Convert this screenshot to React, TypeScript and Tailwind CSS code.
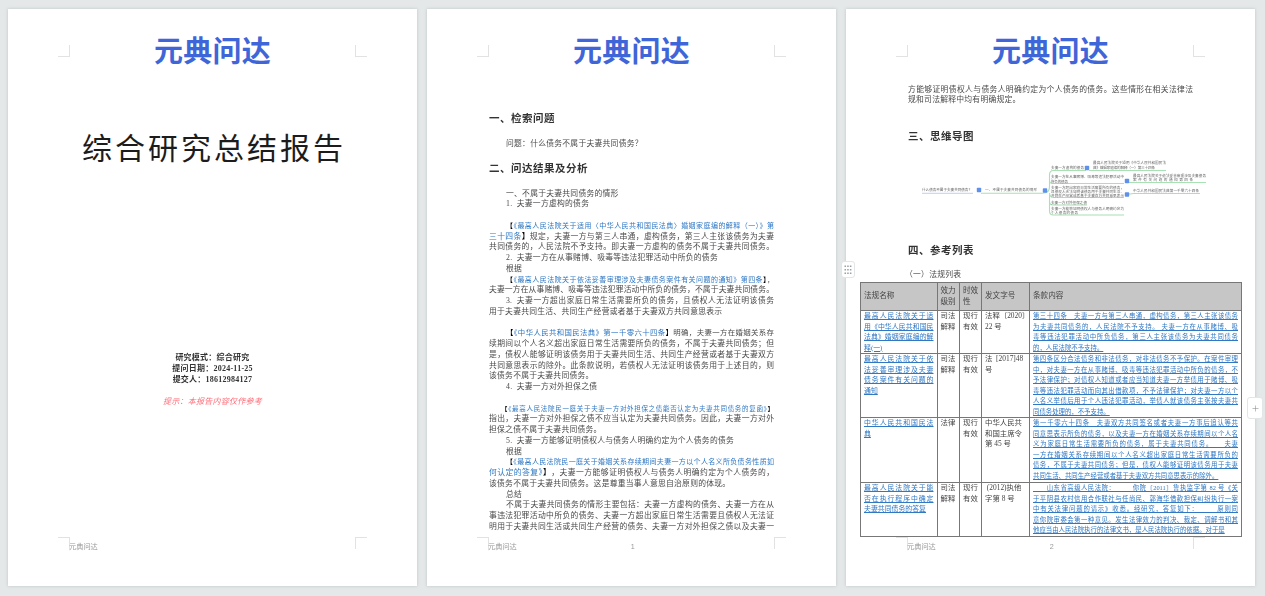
import type { ReactNode } from 'react'
import { Plus } from 'lucide-react'

const serif = "font-['Liberation_Serif','Noto_Sans_CJK_SC',serif]"
const sans = "font-['Liberation_Sans','Noto_Sans_CJK_SC',sans-serif]"

function Mark({ className }: { className: string }) {
  return <div className={`absolute h-3 w-3 border-[#e2e2e2] ${className}`} />
}

function Logo() {
  return (
    <div className={`pt-[28px] text-center text-[29px] leading-[30px] font-bold tracking-[0.3px] text-[#3f66d8] ${sans}`}>
      元典问达
    </div>
  )
}

function Footer({ page }: { page?: number }) {
  return (
    <div className={`relative z-10 mt-auto mb-[34px] flex h-[10px] pl-[61px] text-[7.2px] leading-[10px] text-[#999] blur-[0.4px] ${sans}`}>
      <span>元典问达</span>
      {page && <span className="ml-[114px]">{page}</span>}
    </div>
  )
}

function Page({ children, page }: { children: ReactNode; page?: number }) {
  return (
    <section className="relative flex h-[577px] w-[409px] shrink-0 flex-col bg-white shadow-[0_0_3px_rgba(120,130,130,0.35)]">
      <Mark className="top-[36px] left-[50px] border-r border-b" />
      <Mark className="top-[36px] left-[347px] border-b border-l" />
      <Mark className="top-[528px] left-[50px] border-t border-r" />
      <Mark className="top-[528px] left-[347px] border-t border-l" />
      <Logo />
      {children}
      <Footer page={page} />
    </section>
  )
}

function L({ children, j, i, size = 'text-[7.8px]', className = '' }: { children?: ReactNode; j?: boolean; i?: boolean; size?: string; className?: string }) {
  return (
    <div
      className={`h-[10.75px] leading-[10.75px] text-[#4a4a4a] ${size} ${j ? '[text-align-last:justify]' : 'tracking-[0.25px] whitespace-nowrap'} ${i ? 'pl-[17px]' : ''} ${className}`}
    >
      {children}
    </div>
  )
}

function A({ children }: { children: ReactNode }) {
  return <span className="text-[#2f78c4]">{children}</span>
}

function B({ children }: { children: ReactNode }) {
  return <span className="font-bold text-black">{children}</span>
}

function H({ children, className = '' }: { children: ReactNode; className?: string }) {
  return <h2 className={`h-[14px] text-[10.5px] leading-[14px] font-bold tracking-[0.5px] text-[#333] ${className}`}>{children}</h2>
}

function Cell({ lines, link, size = 'text-[7.4px]', j }: { lines: string[]; link?: boolean; size?: string; j?: boolean }) {
  const color = link ? 'text-[#2f78c4] underline' : 'text-[#444]'
  return (
    <td className={`overflow-hidden border border-[#777] px-[3px] align-top ${color}`}>
      {lines.map((t, n) => (
        <div
          key={n}
          className={`h-[10.5px] leading-[10.5px] ${size} ${j && n < lines.length - 1 ? '[text-align-last:justify]' : 'whitespace-nowrap'}`}
        >
          {t}
        </div>
      ))}
    </td>
  )
}

const rows = [
  {
    h: 'h-[43px]',
    name: ['最高人民法院关于适', '用《中华人民共和国民', '法典》婚姻家庭编的解', '释(一)'],
    level: ['司法', '解释'],
    doc: ['法释〔2020〕', '22 号'],
    text: ['第三十四条　夫妻一方与第三人串通，虚构债务，第三人主张该债务', '为夫妻共同债务的，人民法院不予支持。 夫妻一方在从事赌博、吸', '毒等违法犯罪活动中所负债务，第三人主张该债务为夫妻共同债务', '的，人民法院不予支持。'],
  },
  {
    h: 'h-[64px]',
    name: ['最高人民法院关于依', '法妥善审理涉及夫妻', '债务案件有关问题的', '通知'],
    level: ['司法', '解释'],
    doc: ['法\u00a0\u00a0[2017]48', '号'],
    text: ['第四条区分合法债务和非法债务，对非法债务不予保护。在案件审理', '中，对夫妻一方在从事赌博、吸毒等违法犯罪活动中所负的债务，不', '予法律保护；对债权人知道或者应当知道夫妻一方举债用于赌博、吸', '毒等违法犯罪活动而向其出借款项，不予法律保护；对夫妻一方以个', '人名义举债后用于个人违法犯罪活动，举债人就该债务主张按夫妻共', '同债务处理的，不予支持。'],
  },
  {
    h: 'h-[65px]',
    name: ['中华人民共和国民法', '典'],
    level: ['法律'],
    doc: ['中华人民共', '和国主席令', '第 45 号'],
    text: ['第一千零六十四条　夫妻双方共同签名或者夫妻一方事后追认等共', '同意思表示所负的债务，以及夫妻一方在婚姻关系存续期间以个人名', '义为家庭日常生活需要所负的债务，属于夫妻共同债务。　　夫妻', '一方在婚姻关系存续期间以个人名义超出家庭日常生活需要所负的', '债务，不属于夫妻共同债务；但是，债权人能够证明该债务用于夫妻', '共同生活、共同生产经营或者基于夫妻双方共同意思表示的除外。'],
  },
  {
    h: 'h-[53px]',
    name: ['最高人民法院关于能', '否在执行程序中确定', '夫妻共同债务的答复'],
    level: ['司法', '解释'],
    doc: ['\u00a0(2012)执他', '字第 8 号'],
    text: ['　　山东省高级人民法院：　　　你院〔2011〕鲁执监字第 82 号《关', '于平阴县农村信用合作联社与任尚民、郭海华借款担保纠纷执行一案', '中有关法律问题的请示》收悉。经研究，答复如下：　　　原则同', '意你院审委会第一种意见。发生法律效力的判决、裁定、调解书和其', '他应当由人民法院执行的法律文书，是人民法院执行的依据。对于是'],
  },
]

const headCell = 'border border-[#777] px-[3px] text-left font-normal whitespace-nowrap'

function LawTable() {
  return (
    <table className={`relative z-10 mt-[1.6px] ml-[14px] w-[381px] table-fixed border-collapse bg-white blur-[0.35px] ${serif}`}>
      <colgroup>
        <col className="w-[76.5px]" />
        <col className="w-[22.5px]" />
        <col className="w-[22px]" />
        <col className="w-[48px]" />
        <col className="w-[212px]" />
      </colgroup>
      <thead>
        <tr className="h-[28px] bg-[#c6c6c6] text-[7.6px] leading-[10.6px] text-[#444]">
          <th className={headCell}>法规名称</th>
          <th className={headCell}>效力<br />级别</th>
          <th className={headCell}>时效<br />性</th>
          <th className={headCell}>发文字号</th>
          <th className={headCell}>条款内容</th>
        </tr>
      </thead>
      <tbody>
        {rows.map((r) => (
          <tr key={r.name[0]} className={r.h}>
            <Cell lines={r.name} link size="text-[6.9px]" j />
            <Cell lines={r.level} />
            <Cell lines={['现行', '有效']} />
            <Cell lines={r.doc} />
            <Cell lines={r.text} link size="text-[6.4px]" j />
          </tr>
        ))}
      </tbody>
    </table>
  )
}

const mapText = 'fill-[#666] text-[3.6px]'

function Dot({ x, y }: { x: number; y: number }) {
  return <rect x={x - 2.2} y={y - 2.2} width="4.4" height="4.4" rx="0.8" fill="#5f90ea" />
}

// drawn in page coordinates of the reference minus (920, 152)
function MindMap() {
  return (
    <svg viewBox="0 0 290 70" className={`mt-[9px] ml-[74px] h-[70px] w-[290px] shrink-0 blur-[0.45px] ${sans}`}>
      <path d="M2 40.3H53" stroke="#cdd7f7" strokeWidth="1.2" fill="none" />
      <g stroke="#a9e0b4" strokeWidth="1.1" fill="none">
        <path d="M61 40.3H122c4 0 5-1 6-2" />
        <path d="M126 39c3 0 3.500-2 3.500-6V22c0-3 1-4.500 4-4.500H166" />
        <path d="M129.500 28c0 2 1 2.500 4 2.500H204" />
        <path d="M129.500 40c0 3 1 4 4 4.500H204" />
        <path d="M129.500 42v7c0 2 1 3 4 3H167" />
        <path d="M129.500 48v10c0 3 1 4 4 4H204" />
        <path d="M169 17.500H246" />
        <path d="M209 29.500H286" />
        <path d="M209 41c3 0 2-0.500 5-0.500H280" />
      </g>
      <Dot x={59} y={37} />
      <Dot x={125} y={37.500} />
      <Dot x={167} y={15} />
      <Dot x={207} y={28} />
      <Dot x={207} y={41.500} />
      <g className={mapText}>
        <text x="2" y="38.300" textLength="50">什么债务不属于夫妻共同债务？</text>
        <text x="65" y="38.300" textLength="52">一、不属于夫妻共同债务的情形</text>
        <text x="131" y="16.300" textLength="33">夫妻一方虚构的债务</text>
        <text x="131" y="25" textLength="73">夫妻一方在从事赌博、吸毒等违法犯罪活动中</text>
        <text x="131" y="29.500" textLength="17">所负的债务</text>
        <text x="131" y="35.500" textLength="73">夫妻一方超出家庭日常生活需要所负的债务，</text>
        <text x="131" y="39.800" textLength="73">且债权人无法证明该债务用于夫妻共同生活、</text>
        <text x="131" y="43.800" textLength="73">共同生产经营或者基于夫妻双方共同意思表示</text>
        <text x="131" y="51" textLength="36">夫妻一方对外担保之债</text>
        <text x="131" y="56.500" textLength="73">夫妻一方能够证明债权人与债务人明确约定为</text>
        <text x="131" y="61" textLength="27">个人债务的债务</text>
        <text x="173" y="10.500" textLength="73">最高人民法院关于适用《中华人民共和国民法</text>
        <text x="173" y="15.500" textLength="62">典》婚姻家庭编的解释（一）第三十四条</text>
        <text x="213" y="23.500" textLength="73">最高人民法院关于依法妥善审理涉及夫妻债务</text>
        <text x="213" y="28" textLength="60">案件有关问题的通知第四条</text>
        <text x="213" y="39" textLength="66">中华人民共和国民法典第一千零六十四条</text>
      </g>
    </svg>
  )
}

export default function App() {
  return (
    <main className="flex h-[596px] w-[1265px] gap-[10px] overflow-hidden bg-[#e4e8e9] pt-[9px] pl-[8px]">
      <Page>
        <h1 className={`mt-[65px] h-[33px] pl-[3px] text-center text-[30px] leading-[33px] tracking-[3px] text-[#1c1c1c] ${serif}`}>
          综合研究总结报告
        </h1>
        <div className={`mt-[187px] text-center text-[8px] leading-[11px] font-bold tracking-[0.25px] text-[#333] blur-[0.35px] ${serif}`}>
          <p>研究模式：综合研究</p>
          <p>提问日期：2024-11-25</p>
          <p>提交人：18612984127</p>
          <p className="mt-[11px] font-normal text-[#ff6f7a] italic">提示：本报告内容仅作参考</p>
        </div>
      </Page>

      <Page page={1}>
        <div className={`flex flex-col px-[62px] blur-[0.35px] ${serif}`}>
          <H className="mt-[45px]">一、检索问题</H>
          <L i className="mt-[12.6px]">问题：什么债务不属于夫妻共同债务？</L>
          <H className="mt-[12.6px]">二、问达结果及分析</H>
          <L i className="mt-[12.6px]">一、不属于夫妻共同债务的情形</L>
          <L i>1.{'\u00a0\u00a0'}夫妻一方虚构的债务</L>
          <L />
          <L j i size="text-[7px]"><B>【</B><A>《最高人民法院关于适用〈中华人民共和国民法典〉婚姻家庭编的解释（一）》第</A></L>
          <L j><A>三十四条</A><B>】</B>规定，夫妻一方与第三人串通，虚构债务，第三人主张该债务为夫妻</L>
          <L j>共同债务的，人民法院不予支持。即夫妻一方虚构的债务不属于夫妻共同债务。</L>
          <L i>2.{'\u00a0\u00a0'}夫妻一方在从事赌博、吸毒等违法犯罪活动中所负的债务</L>
          <L i>根据</L>
          <L j i size="text-[7px]"><B>【</B><A>《最高人民法院关于依法妥善审理涉及夫妻债务案件有关问题的通知》第四条</A><B>】</B>，</L>
          <L j>夫妻一方在从事赌博、吸毒等违法犯罪活动中所负的债务，不属于夫妻共同债务。</L>
          <L i j>3.{'\u00a0\u00a0'}夫妻一方超出家庭日常生活需要所负的债务，且债权人无法证明该债务</L>
          <L>用于夫妻共同生活、共同生产经营或者基于夫妻双方共同意思表示</L>
          <L />
          <L j i size="text-[7.4px]"><B>【</B><A>《中华人民共和国民法典》第一千零六十四条</A><B>】</B>明确，夫妻一方在婚姻关系存</L>
          <L j>续期间以个人名义超出家庭日常生活需要所负的债务，不属于夫妻共同债务；但</L>
          <L j>是，债权人能够证明该债务用于夫妻共同生活、共同生产经营或者基于夫妻双方</L>
          <L j>共同意思表示的除外。此条款说明，若债权人无法证明该债务用于上述目的，则</L>
          <L>该债务不属于夫妻共同债务。</L>
          <L i>4.{'\u00a0\u00a0'}夫妻一方对外担保之债</L>
          <L />
          <L j size="text-[6.5px]" className="pl-[12px]"><B>【</B><A>《最高人民法院民一庭关于夫妻一方对外担保之债能否认定为夫妻共同债务的复函》</A><B>】</B></L>
          <L j>指出，夫妻一方对外担保之债不应当认定为夫妻共同债务。因此，夫妻一方对外</L>
          <L>担保之债不属于夫妻共同债务。</L>
          <L i>5.{'\u00a0\u00a0'}夫妻一方能够证明债权人与债务人明确约定为个人债务的债务</L>
          <L i>根据</L>
          <L j i size="text-[7px]"><B>【</B><A>《最高人民法院民一庭关于婚姻关系存续期间夫妻一方以个人名义所负债务性质如</A></L>
          <L j><A>何认定的答复》</A><B>】</B>，夫妻一方能够证明债权人与债务人明确约定为个人债务的，</L>
          <L>该债务不属于夫妻共同债务。这是尊重当事人意思自治原则的体现。</L>
          <L i>总结</L>
          <L i j>不属于夫妻共同债务的情形主要包括：夫妻一方虚构的债务、夫妻一方在从</L>
          <L j>事违法犯罪活动中所负的债务、夫妻一方超出家庭日常生活需要且债权人无法证</L>
          <L j>明用于夫妻共同生活或共同生产经营的债务、夫妻一方对外担保之债以及夫妻一</L>
        </div>
      </Page>

      <Page page={2}>
        <div className={`flex flex-col px-[62px] blur-[0.35px] ${serif}`}>
          <L j className="mt-[17.6px]">方能够证明债权人与债务人明确约定为个人债务的债务。这些情形在相关法律法</L>
          <L>规和司法解释中均有明确规定。</L>
          <H className="mt-[24px]">三、思维导图</H>
        </div>
        <MindMap />
        <div className={`flex flex-col px-[62px] blur-[0.35px] ${serif}`}>
          <H className="mt-[21px] text-[#1a1a1a]">四、参考列表</H>
          <L className="mt-[11.6px] -ml-[3px]">（一）法规列表</L>
        </div>
        <LawTable />
      </Page>

      <div className="absolute top-[261px] left-[841px] z-20 flex h-[17px] w-[14px] items-center justify-center rounded-[3px] border border-[#e3e6e6] bg-white">
        <svg viewBox="0 0 8 10" className="h-[10px] w-[8px] fill-[#9a9fa3]">
          <rect x="0.5" y="0.5" width="1.5" height="1.5" />
          <rect x="3.2" y="0.5" width="1.5" height="1.5" />
          <rect x="5.900" y="0.5" width="1.5" height="1.5" />
          <rect x="0.5" y="4" width="1.5" height="1.5" />
          <rect x="3.2" y="4" width="1.5" height="1.5" />
          <rect x="5.900" y="4" width="1.5" height="1.5" />
          <rect x="0.5" y="7.500" width="1.5" height="1.5" />
          <rect x="3.2" y="7.500" width="1.5" height="1.5" />
          <rect x="5.900" y="7.500" width="1.5" height="1.5" />
        </svg>
      </div>
      <div className="absolute top-[397px] left-[1247px] z-20 flex h-[22px] w-[16px] items-center justify-center rounded-[3px] border border-[#e3e6e6] bg-white">
        <Plus className="h-[9px] w-[9px] text-[#8a8f93]" strokeWidth={1.5} />
      </div>
    </main>
  )
}
